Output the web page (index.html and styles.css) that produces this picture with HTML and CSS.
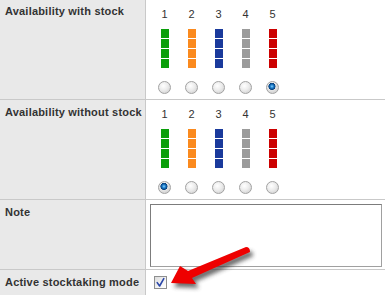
FILE: index.html
```html
<!DOCTYPE html>
<html>
<head>
<meta charset="utf-8">
<link rel="stylesheet" href="styles.css">
</head>
<body>
<div class="page">
  <div class="form">
    <div class="label row1">Availability with stock</div>
    <div class="field row1">
      <div class="choices">
        <div class="choice"><span class="num">1</span><span class="bar green"><i></i><i></i><i></i><i></i></span><input class="radio" type="radio" name="a1"></div>
        <div class="choice"><span class="num">2</span><span class="bar orange"><i></i><i></i><i></i><i></i></span><input class="radio" type="radio" name="a1"></div>
        <div class="choice"><span class="num">3</span><span class="bar blue"><i></i><i></i><i></i><i></i></span><input class="radio" type="radio" name="a1"></div>
        <div class="choice"><span class="num">4</span><span class="bar grey"><i></i><i></i><i></i><i></i></span><input class="radio" type="radio" name="a1"></div>
        <div class="choice"><span class="num">5</span><span class="bar red"><i></i><i></i><i></i><i></i></span><input class="radio" type="radio" name="a1" checked></div>
      </div>
    </div>

    <div class="label row2">Availability without stock</div>
    <div class="field row2">
      <div class="choices">
        <div class="choice"><span class="num">1</span><span class="bar green"><i></i><i></i><i></i><i></i></span><input class="radio" type="radio" name="a2" checked></div>
        <div class="choice"><span class="num">2</span><span class="bar orange"><i></i><i></i><i></i><i></i></span><input class="radio" type="radio" name="a2"></div>
        <div class="choice"><span class="num">3</span><span class="bar blue"><i></i><i></i><i></i><i></i></span><input class="radio" type="radio" name="a2"></div>
        <div class="choice"><span class="num">4</span><span class="bar grey"><i></i><i></i><i></i><i></i></span><input class="radio" type="radio" name="a2"></div>
        <div class="choice"><span class="num">5</span><span class="bar red"><i></i><i></i><i></i><i></i></span><input class="radio" type="radio" name="a2"></div>
      </div>
    </div>

    <div class="label">Note</div>
    <div class="field note-cell"><textarea class="note"></textarea></div>

    <div class="label last">Active stocktaking mode</div>
    <div class="field check-cell last">
      <span class="checkbox">
        <svg width="11" height="11" viewBox="0 0 11 11"><path d="M2.2 5.6 L4.6 9 L8.8 1.6" fill="none" stroke="#2a46a8" stroke-width="1.6" stroke-linejoin="round" stroke-linecap="round"/></svg>
      </span>
    </div>
  </div>

  <svg class="arrow" width="385" height="295" viewBox="0 0 385 295">
    <defs>
      <filter id="sh" x="-20%" y="-20%" width="140%" height="140%">
        <feGaussianBlur stdDeviation="2"/>
      </filter>
    </defs>
    <g transform="translate(3,4)" filter="url(#sh)" fill="#3a3a3a" opacity="0.75">
      <path d="M246 247 Q250 247 250 252 L192 278 L196 284 L171 283 L180 266 L188 271 Z"/>
    </g>
    <path d="M246 247 Q250 247 250 252 L192 278 L196 284 L171 283 L180 266 L188 271 Z" fill="#ee0000"/>
  </svg>
</div>
</body>
</html>
```

FILE: styles.css
```css
html, body {
  margin: 0;
  padding: 0;
  background: #ffffff;
  overflow: hidden;
}

.page {
  position: relative;
  width: 385px;
  height: 295px;
  overflow: hidden;
}

.form {
  display: grid;
  grid-template-columns: 146px 1fr;
  font-family: "Liberation Sans", Arial, sans-serif;
}

.label {
  background: #e9e9e9;
  border-right: 1px solid #c9c9c9;
  border-bottom: 1px solid #c9c9c9;
  padding: 6px 0 0 5px;
  font-size: 11px;
  line-height: 13px;
  font-weight: bold;
  letter-spacing: 0.2px;
  color: #333;
}

.label.row1 {
  padding-top: 5px;
}

.field {
  border-bottom: 1px solid #c9c9c9;
  background: #fff;
}

.label.last,
.field.last {
  border-bottom: none;
}

.choices {
  display: flex;
  padding: 0 0 0 5px;
}

.choice {
  width: 27px;
  display: flex;
  flex-direction: column;
  align-items: center;
  padding: 8px 0 5px;
}

.row2 .choice {
  padding-top: 8px;
}

.num {
  font-size: 11px;
  line-height: 13px;
  color: #333;
  height: 13px;
}

.bar {
  display: flex;
  flex-direction: column;
  gap: 1px;
  margin-top: 8px;
  width: 8px;
}

.bar i {
  display: block;
  height: 9px;
}

.green i { background: #0a9f0a; }
.orange i { background: #fb8a1e; }
.blue i { background: #1a3a9c; }
.grey i { background: #9b9b9b; }
.red i { background: #cc0000; }

.radio {
  appearance: none;
  -webkit-appearance: none;
  margin: 13px 0 0;
  width: 13px;
  height: 13px;
  border-radius: 50%;
  border: 1px solid #a2a2a2;
  box-sizing: border-box;
  background: radial-gradient(circle at 40% 35%, #ffffff 0, #ececec 45%, #c9c9c9 100%);
}

.radio:checked {
  background:
    radial-gradient(circle at 45% 40%, #8fd2ff 0, #2f8fd8 1.3px, #0d5fa8 2.4px, #0a3e78 3.3px, rgba(0,0,0,0) 3.8px),
    radial-gradient(circle at 40% 35%, #ffffff 0, #e6e6e6 45%, #c4c4c4 100%);
}

.note-cell {
  padding: 4px 3px 2px 4px;
}

.note {
  display: block;
  width: 100%;
  height: 63px;
  box-sizing: border-box;
  margin: 0;
  border: 1px solid #a0a0a0;
  border-top-color: #7c7c7c;
  border-left-color: #7c7c7c;
  resize: none;
  background: #fff;
}

.check-cell {
  padding: 6px 0 10px 8px;
}

.checkbox {
  display: flex;
  align-items: center;
  justify-content: center;
  width: 13px;
  height: 13px;
  box-sizing: border-box;
  border: 1px solid #8e8f8f;
  background: linear-gradient(135deg, #dcdcdc 0, #f4f4f4 60%, #ffffff 100%);
}

.checkbox svg {
  display: block;
}

.arrow {
  position: absolute;
  left: 0;
  top: 0;
  pointer-events: none;
}
```
